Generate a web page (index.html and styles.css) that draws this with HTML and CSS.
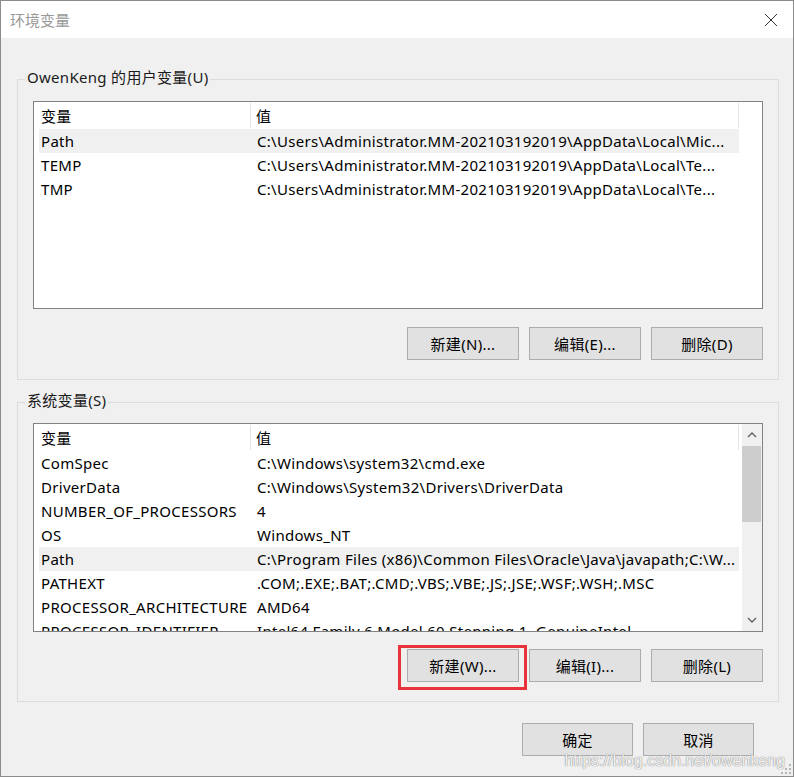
FILE: index.html
```html
<!DOCTYPE html>
<html lang="zh-CN">
  <head>
    <meta charset="UTF-8" />
    <title>环境变量</title>
    <link rel="stylesheet" href="styles.css">
  </head>
  <body>
    <div class="window">
      <div class="titlebar">
        <span class="title">环境变量</span>
        <svg class="close" width="14" height="14" viewBox="0 0 14 14">
          <path d="M1 1 L13 13 M13 1 L1 13" stroke="#333" stroke-width="1" fill="none" />
        </svg>
      </div>

      <div class="content">
        <section class="group">
          <div class="group-title">OwenKeng 的用户变量(U)</div>
          <div class="list">
            <div class="list-body">
              <div class="row head">
                <span class="c1">变量</span>
                <span class="c2">值</span>
              </div>
              <div class="row sel">
                <span class="c1">Path</span>
                <span class="c2">C:\Users\Administrator.MM-202103192019\AppData\Local\Mic...</span>
              </div>
              <div class="row">
                <span class="c1">TEMP</span>
                <span class="c2">C:\Users\Administrator.MM-202103192019\AppData\Local\Te...</span>
              </div>
              <div class="row">
                <span class="c1">TMP</span>
                <span class="c2">C:\Users\Administrator.MM-202103192019\AppData\Local\Te...</span>
              </div>
            </div>
          </div>
          <div class="buttons">
            <button class="btn">新建(N)...</button>
            <button class="btn">编辑(E)...</button>
            <button class="btn">删除(D)</button>
          </div>
        </section>

        <section class="group system">
          <div class="group-title">系统变量(S)</div>
          <div class="list">
            <div class="list-body">
              <div class="row head">
                <span class="c1">变量</span>
                <span class="c2">值</span>
              </div>
              <div class="row">
                <span class="c1">ComSpec</span>
                <span class="c2">C:\Windows\system32\cmd.exe</span>
              </div>
              <div class="row">
                <span class="c1">DriverData</span>
                <span class="c2">C:\Windows\System32\Drivers\DriverData</span>
              </div>
              <div class="row">
                <span class="c1">NUMBER_OF_PROCESSORS</span>
                <span class="c2">4</span>
              </div>
              <div class="row">
                <span class="c1">OS</span>
                <span class="c2">Windows_NT</span>
              </div>
              <div class="row sel">
                <span class="c1">Path</span>
                <span class="c2">C:\Program Files (x86)\Common Files\Oracle\Java\javapath;C:\W...</span>
              </div>
              <div class="row">
                <span class="c1">PATHEXT</span>
                <span class="c2">.COM;.EXE;.BAT;.CMD;.VBS;.VBE;.JS;.JSE;.WSF;.WSH;.MSC</span>
              </div>
              <div class="row">
                <span class="c1">PROCESSOR_ARCHITECTURE</span>
                <span class="c2">AMD64</span>
              </div>
              <div class="row">
                <span class="c1">PROCESSOR_IDENTIFIER</span>
                <span class="c2">Intel64 Family 6 Model 60 Stepping 1, GenuineIntel</span>
              </div>
            </div>
            <div class="scrollbar">
              <svg class="arrow" width="20" height="22" viewBox="0 0 20 22">
                <path d="M6 13 L10 9 L14 13" stroke="#606060" stroke-width="1.3" fill="none" />
              </svg>
              <div class="thumb"></div>
              <div class="track"></div>
              <svg class="arrow" width="20" height="22" viewBox="0 0 20 22">
                <path d="M6 9 L10 13 L14 9" stroke="#606060" stroke-width="1.3" fill="none" />
              </svg>
            </div>
          </div>
          <div class="buttons">
            <button class="btn marked">新建(W)...</button>
            <button class="btn">编辑(I)...</button>
            <button class="btn">删除(L)</button>
          </div>
        </section>

        <div class="footer">
          <button class="btn">确定</button>
          <button class="btn">取消</button>
        </div>
      </div>

      <div class="watermark">https://blog.csdn.net/owenkeng</div>
      <svg class="grip" width="12" height="12" viewBox="0 0 12 12">
        <rect x="9" y="1" width="2" height="2" fill="#b5b5b5" />
        <rect x="5" y="5" width="2" height="2" fill="#b5b5b5" />
        <rect x="9" y="5" width="2" height="2" fill="#b5b5b5" />
        <rect x="1" y="9" width="2" height="2" fill="#b5b5b5" />
        <rect x="5" y="9" width="2" height="2" fill="#b5b5b5" />
        <rect x="9" y="9" width="2" height="2" fill="#b5b5b5" />
      </svg>
    </div>
  </body>
</html>
```

FILE: styles.css
```css
* {
  box-sizing: border-box;
}

body {
  margin: 0;
  font-family: "Noto Sans", "Noto Sans CJK SC", sans-serif;
  font-size: 15px;
  letter-spacing: 0.3px;
  color: #000;
}

.window {
  position: relative;
  width: 794px;
  height: 777px;
  border: 1px solid #8c8c8c;
  background: #f0f0f0;
  overflow: hidden;
}

.titlebar {
  height: 37px;
  background: #fff;
  display: flex;
  align-items: center;
  justify-content: space-between;
  padding: 0 15px 0 9px;
}

.title {
  color: #999;
  font-size: 15px;
  letter-spacing: 0;
}

.content {
  padding: 41px 14px 0 16px;
}

.group {
  position: relative;
  border: 1px solid #dcdcdc;
  padding: 21px 15px 19px 15px;
}

.group.system {
  margin-top: 22px;
  padding-top: 20px;
}

.group-title {
  position: absolute;
  top: -14px;
  left: 7px;
  padding: 0 2px;
  background: #f0f0f0;
  line-height: 22px;
  color: #1a1a1a;
}

.list {
  display: flex;
  height: 208px;
  border: 1px solid #828282;
  background: #fff;
  overflow: hidden;
}

.system .list {
  height: 209px;
}

.list-body {
  flex: 1;
  padding-left: 5px;
  overflow: hidden;
}

.row {
  display: flex;
  align-items: center;
  width: 700px;
  height: 24px;
  white-space: nowrap;
}

.row.head {
  height: 27px;
  align-items: stretch;
}

.row.sel {
  background: #f0f0f0;
}

.c1 {
  width: 212px;
  padding-left: 2px;
  flex-shrink: 0;
}

.c2 {
  flex: 1;
  padding-left: 6px;
  overflow: hidden;
}

.head .c1,
.head .c2 {
  display: flex;
  align-items: center;
  border-right: 1px solid #e5e5e5;
  margin: 1px 0;
}

.head .c2 {
  padding-left: 5px;
}

.scrollbar {
  width: 20px;
  display: flex;
  flex-direction: column;
  background: #f0f0f0;
}

.arrow {
  display: block;
  flex-shrink: 0;
}

.thumb {
  height: 76px;
  margin-right: 1px;
  background: #cdcdcd;
}

.track {
  flex: 1;
}

.buttons {
  display: flex;
  justify-content: flex-end;
  gap: 10px;
  margin-top: 18px;
}

.system .buttons {
  margin-top: 17px;
}

.btn {
  position: relative;
  width: 112px;
  height: 33px;
  padding: 0;
  border: 1px solid #adadad;
  background: #e1e1e1;
  font-family: inherit;
  font-size: 15px;
  letter-spacing: inherit;
  color: #000;
}

.btn.marked::after {
  content: "";
  position: absolute;
  top: -5px;
  left: -10px;
  right: -9px;
  bottom: -9px;
  border: 3px solid #e8323c;
}

.footer {
  display: flex;
  justify-content: flex-end;
  gap: 10px;
  margin-top: 21px;
  padding-right: 25px;
}

.footer .btn {
  width: 111px;
}

.watermark {
  position: absolute;
  right: 8px;
  bottom: 6px;
  font-family: "Liberation Sans", sans-serif;
  font-size: 16px;
  letter-spacing: 0;
  color: rgba(255, 255, 255, 0.9);
  text-shadow: 0 0 1px #8a8a8a, 0 0 1px #8a8a8a;
}

.grip {
  position: absolute;
  right: 1px;
  bottom: 1px;
}
```
